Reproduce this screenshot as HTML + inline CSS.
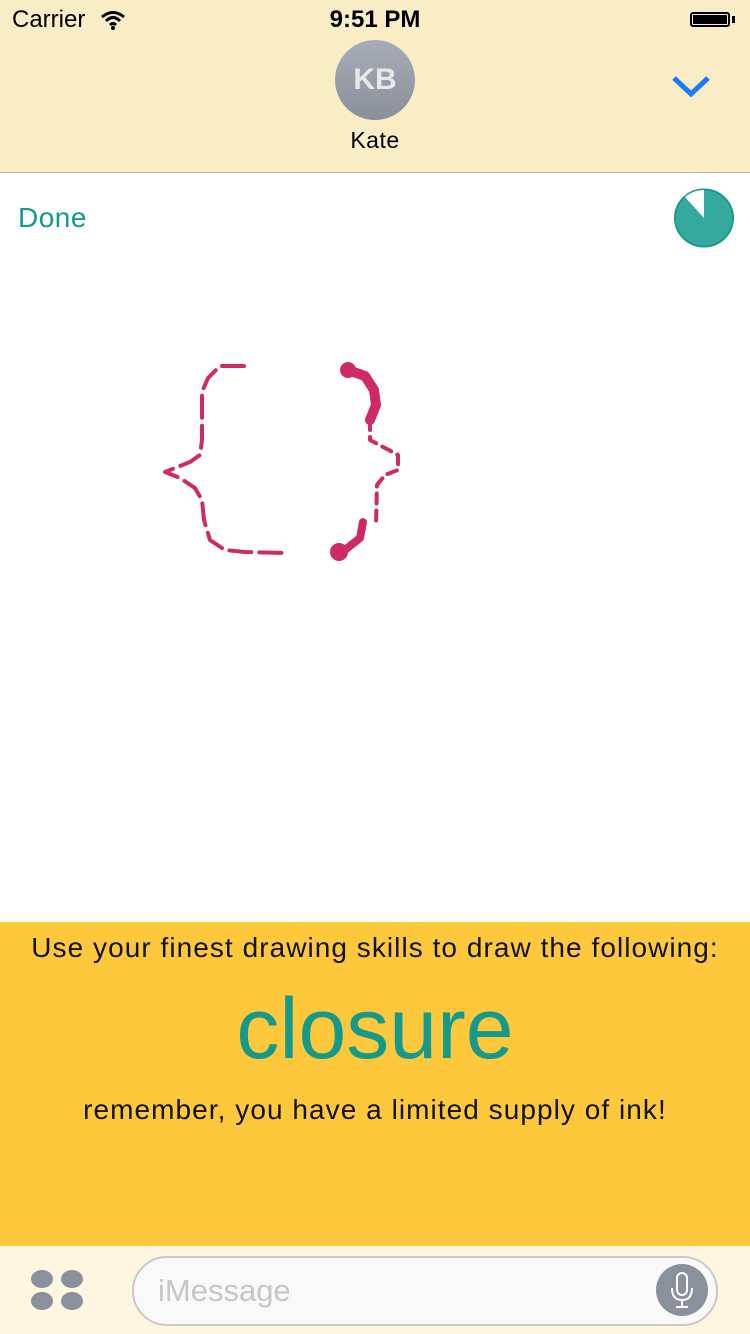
<!DOCTYPE html>
<html><head><meta charset="utf-8"><style>
body{margin:0;width:750px;height:1334px;position:relative;background:#fff;font-family:"Liberation Sans",sans-serif;overflow:hidden}
.hdr{position:absolute;left:0;top:0;width:750px;height:172px;background:#f9edc6;border-bottom:1px solid #b8b3a4}
.abs{position:absolute}
</style></head><body>
<div class="hdr"></div>
<div class="abs" style="left:12px;top:6px;font-size:24px;color:#000">Carrier</div>
<svg class="abs" style="left:100px;top:10px" width="26" height="20" viewBox="0 0 26 20"><path d="M2 7 Q13 -2 24 7 M6 11 Q13 4 20 11 M10 15 Q13 12 16 15" stroke="#000" stroke-width="3" fill="none"/><circle cx="13" cy="18" r="2" fill="#000"/></svg>
<div class="abs" style="left:0;width:750px;text-align:center;top:6px;font-size:24px;font-weight:bold">9:51 PM</div>
<div class="abs" style="left:690px;top:12px;width:40px;height:15px;border:2px solid #000;border-radius:3px;box-sizing:border-box;padding:1px"><div style="background:#000;width:100%;height:100%"></div></div>
<div class="abs" style="left:732px;top:16px;width:3px;height:7px;background:#000"></div>
<div class="abs" style="left:335px;top:40px;width:80px;height:80px;border-radius:50%;background:linear-gradient(#a8acb8,#8b8f9a);color:#e8e8ea;font-weight:bold;font-size:30px;text-align:center;line-height:80px">KB</div>
<div class="abs" style="left:0;width:750px;text-align:center;top:127px;font-size:23px;letter-spacing:0.5px">Kate</div>
<svg class="abs" style="left:670px;top:72px" width="42" height="28"><path d="M4 6 L21 22 L38 6" stroke="#1a7cf5" stroke-width="5" fill="none"/></svg>
<div class="abs" style="left:18px;top:202px;font-size:28px;color:#15998a;letter-spacing:0.5px">Done</div>
<svg class="abs" style="left:672px;top:187px" width="64" height="62"><ellipse cx="32" cy="31" rx="29" ry="28.5" fill="#34a99e" stroke="#1a9b8a" stroke-width="2"/><path d="M32 31 L32 3 A29 28 0 0 0 13 10 Z" fill="#fff"/></svg>
<svg class="abs" style="left:0;top:0" width="750" height="600" fill="none" stroke="#cf2a68" stroke-linecap="round" stroke-linejoin="round">
<polyline points="244,366 220,366 208,378 202,392 202,410 202,440 200,455 190,462 165,472 180,478 195,488 202,500 204,520 210,540 225,550 245,552 288,553" stroke-width="4" stroke-dasharray="22,8"/>
<polyline points="348,370 365,376 374,390 376,405 370,420" stroke-width="10"/>
<polyline points="370,420 370,440 385,448 398,455 398,470 385,475 377,485 376,525" stroke-width="4" stroke-dasharray="10,7"/>
<polyline points="363,522 360,538 345,550" stroke-width="8"/>
<circle cx="348" cy="370" r="8" fill="#cf2a68" stroke="none"/>
<circle cx="339" cy="552" r="9" fill="#cf2a68" stroke="none"/>
</svg>
<div class="abs" style="left:0;top:922px;width:750px;height:324px;background:#fdc83c"></div>
<div class="abs" style="left:0;width:750px;text-align:center;top:932px;font-size:28px;color:#111;letter-spacing:1.05px">Use your finest drawing skills to draw the following:</div>
<div class="abs" style="left:0;width:750px;text-align:center;top:980px;font-size:86px;color:#15998a">closure</div>
<div class="abs" style="left:0;width:750px;text-align:center;top:1094px;font-size:28px;color:#111;letter-spacing:1.05px">remember, you have a limited supply of ink!</div>
<div class="abs" style="left:0;top:1246px;width:750px;height:88px;background:#fef6e0"></div>
<svg class="abs" style="left:30px;top:1269px" width="54" height="44"><g fill="#8a909c"><ellipse cx="12" cy="10" rx="11" ry="9"/><ellipse cx="42" cy="10" rx="11" ry="9"/><ellipse cx="12" cy="32" rx="11" ry="9"/><ellipse cx="42" cy="32" rx="11" ry="9"/></g></svg>
<div class="abs" style="left:132px;top:1256px;width:586px;height:70px;box-sizing:border-box;border:2px solid #c9c9cc;border-radius:35px;background:#f9f9f9"></div>
<div class="abs" style="left:158px;top:1273px;font-size:31px;color:#c6c6ca">iMessage</div>
<div class="abs" style="left:656px;top:1264px;width:52px;height:52px;border-radius:50%;background:#8a909c"></div>
<svg class="abs" style="left:656px;top:1264px" width="52" height="52" fill="none" stroke="#fff" stroke-width="2"><rect x="21" y="9" width="10" height="22" rx="5"/><path d="M16 24 Q16 36 26 36 Q36 36 36 24 M26 36 V43 M20 43 H32"/></svg>
</body></html>
